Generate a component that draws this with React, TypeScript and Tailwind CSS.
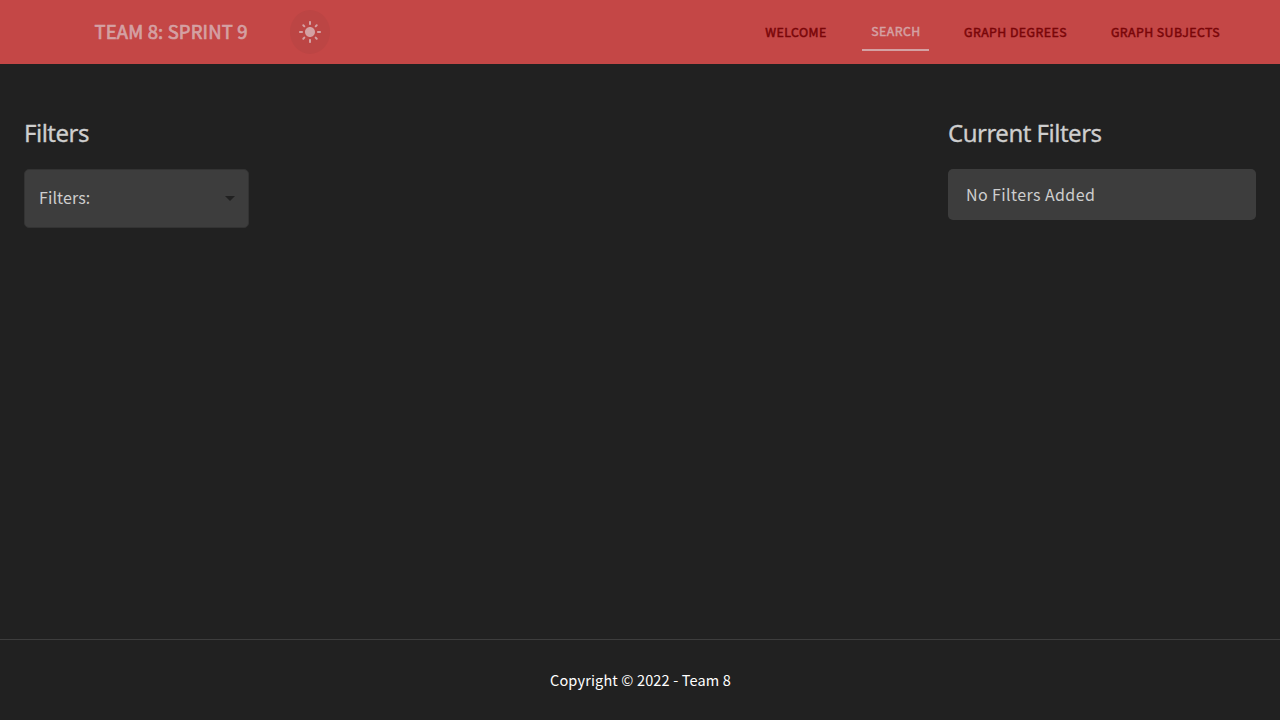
import { MdLightMode, MdArrowDropDown } from "react-icons/md";

const sans = "font-['Noto_Sans_CJK_SC','Noto_Sans',sans-serif]";
const heading = "font-['Noto_Sans','Open_Sans',sans-serif]";

function Header() {
  return (
    <header className="flex h-16 items-center justify-between bg-[#c44746] pr-[51px] pl-[94.5px]">
      <div className="flex items-center">
        <span className="w-[195.5px] text-[18.5px] tracking-[0.15px] whitespace-nowrap text-[#d4a1a3] [-webkit-text-stroke:0.7px_#d4a1a3]">
          TEAM 8: SPRINT 9
        </span>
        <button className="flex h-11 w-10 items-center justify-center rounded-[50%] bg-[#bc4544] text-[#d4a1a3]">
          <MdLightMode size={24} />
        </button>
      </div>
      <nav className="flex items-center gap-[26px] text-[12.3px] tracking-[0.45px] whitespace-nowrap text-[#790609] [-webkit-text-stroke:0.5px_currentColor]">
        <a className="w-20 text-center">WELCOME</a>
        <a className="flex h-[38px] w-[67px] items-center justify-center border-b-2 border-[#d4a1a3] pl-px text-[#d4a1a3]">
          SEARCH
        </a>
        <a className="w-[121px] text-center">GRAPH DEGREES</a>
        <a className="w-[127px] text-center">GRAPH SUBJECTS</a>
      </nav>
    </header>
  );
}

export default function App() {
  return (
    <div className={`flex h-screen flex-col bg-[#212121] ${sans}`}>
      <Header />
      <main className="flex flex-1 justify-between px-6 pt-[53px] text-[#cecece]">
        <section className="w-[225px]">
          <h2 className={`mb-5 h-8 text-2xl leading-8 tracking-[-0.5px] whitespace-nowrap [-webkit-text-stroke:0.3px_#cecece] ${heading}`}>
            Filters
          </h2>
          <div className="flex h-[59px] items-center justify-between rounded-[5px] border border-[#333333] bg-[#3d3d3d] pr-[6px] pb-[3px] pl-[14px] text-[16px] tracking-[0.1px]">
            <span>Filters:</span>
            <MdArrowDropDown size={24} className="mt-0.5 text-[#212121]" />
          </div>
        </section>
        <section className="w-[308px]">
          <h2 className={`mb-5 h-8 text-2xl leading-8 tracking-[-0.5px] whitespace-nowrap [-webkit-text-stroke:0.3px_#cecece] ${heading}`}>
            Current Filters
          </h2>
          <div className="flex h-[51px] items-center rounded-[5px] bg-[#3d3d3d] pb-0.5 pl-[18px] text-[16px] tracking-[0.4px]">
            No Filters Added
          </div>
        </section>
      </main>
      <footer className="flex h-[81px] items-center justify-center border-t border-[#3d3d3d] pl-px text-[14.5px] tracking-[0.15px] text-white">
        Copyright © 2022 - Team 8
      </footer>
    </div>
  );
}
